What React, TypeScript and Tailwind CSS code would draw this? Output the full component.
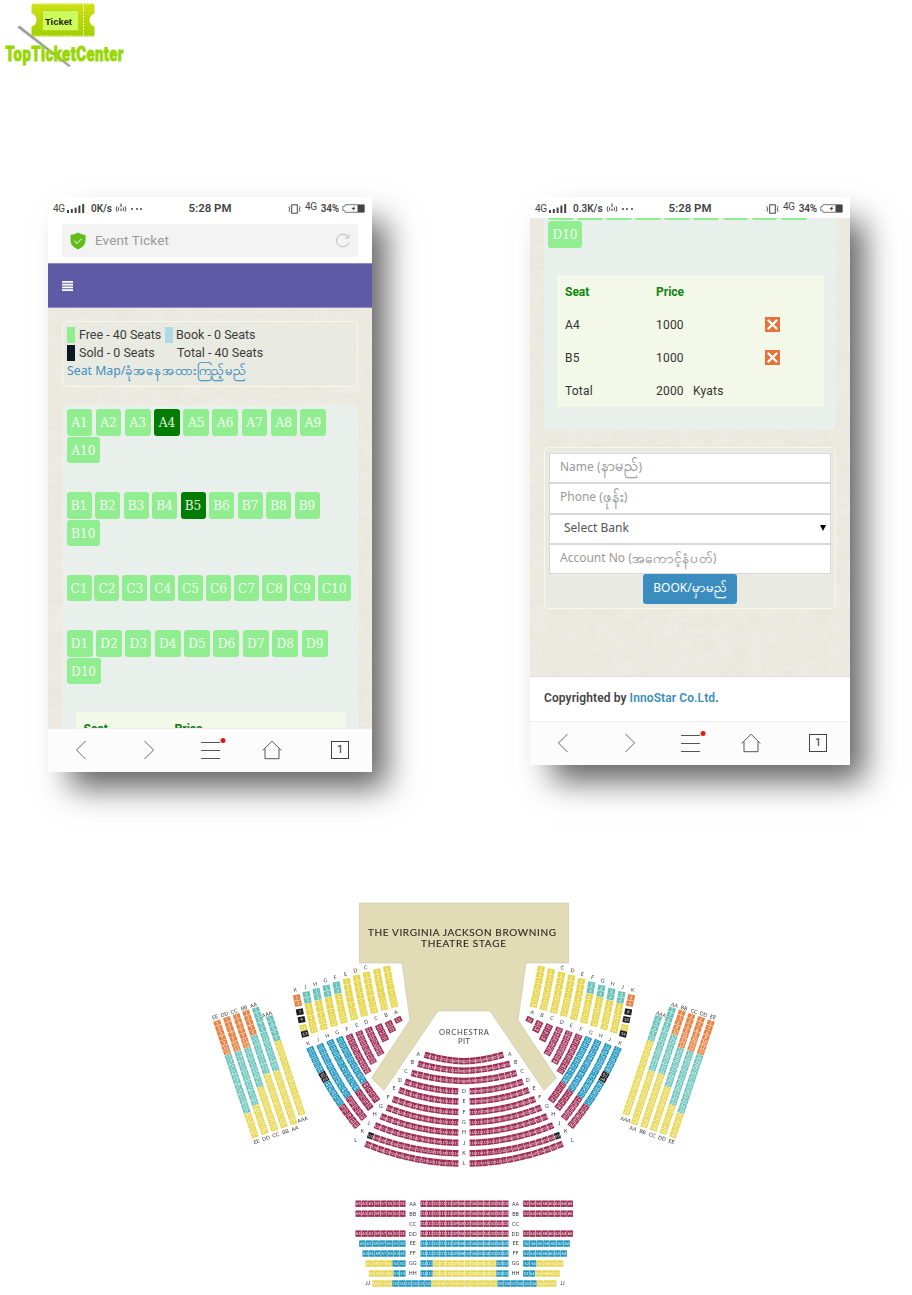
import { ReactNode } from "react";
import clsx from "clsx";

type Point = [number, number];
type Run = [string, number];

const RED = "#9c2b50";
const BLUE = "#1c93bd";
const YELLOW = "#e6d548";
const TEAL = "#66c2b9";
const ORANGE = "#e58142";
const BLACK = "#1c1a1a";

// the seat map is symmetric around the middle of the stage
const CENTER = 464;

function Signal() {
  return (
    <svg width="18" height="10" viewBox="0 0 18 10" fill="#444">
      <rect x="0" y="6" width="2" height="3" />
      <rect x="3.8" y="5" width="2" height="4" />
      <rect x="7.6" y="3.6" width="2" height="5.4" />
      <rect x="11.4" y="1.500" width="2" height="7.500" />
      <rect x="15.2" y="0" width="2" height="9" />
    </svg>
  );
}

function Hotspot() {
  return (
    <svg width="12" height="11" viewBox="0 0 12 11" fill="none" stroke="#555">
      <path d="M2 3.2Q.2 6 2 8.8M10 3.2Q11.800 6 10 8.800M3.900 4.300Q2.800 6 3.900 7.800M8.100 4.300Q9.200 6 8.100 7.800" />
      <path d="M6 .5V4M6 5.500V8" strokeWidth="1.200" />
    </svg>
  );
}

function Battery() {
  return (
    <svg width="23" height="9" viewBox="0 0 23 9" fill="none">
      <path
        d="M22 .7H3.200L2.600 2.500H.8V6.500H2.600L3.200 8.300H22Z"
        stroke="#777"
      />
      <rect x="15.500" y="1" width="7" height="7" fill="#444" />
      <path d="M12.800 2L9.500 4.900h1.900L10.500 7 13.600 4.200h-1.700z" fill="#333" />
    </svg>
  );
}

function Vibrate() {
  return (
    <svg width="13" height="10" viewBox="0 0 13 10" fill="none" stroke="#444">
      <rect x="3.700" y=".8" width="5.600" height="8.400" />
      <path
        d="M1.900 2.200l-1 1.300 1 1.500-1 1.500 1 1.300M11.100 2.200l1 1.300-1 1.500 1 1.500-1 1.300"
        strokeWidth=".9"
      />
    </svg>
  );
}

function StatusBar({ speed }: { speed: string }) {
  return (
    <div className="relative flex h-[21px] shrink-0 items-center bg-white pt-[2px] pr-[7px] pl-[5px] text-[#444]">
      <span className="w-[14px] text-[10px] tracking-[-0.3px]">4G</span>
      <Signal />
      <span className="ml-[6px] mr-[3px] text-[10px] font-semibold whitespace-nowrap">
        {speed}
      </span>
      <Hotspot />
      <span className="ml-[4px] flex gap-[2.500px]">
        <i className="size-[2px] rounded-full bg-[#444]" />
        <i className="size-[2px] rounded-full bg-[#444]" />
        <i className="size-[2px] rounded-full bg-[#444]" />
      </span>
      <div className="ml-auto flex items-center">
        <Vibrate />
        <span className="relative -top-[2px] ml-[4px] mr-[4px] text-[10px] tracking-[-0.3px]">
          4G
        </span>
        <span className="mr-[3px] text-[10px] font-semibold tracking-[-0.2px]">
          34%
        </span>
        <Battery />
      </div>
      <span className="absolute inset-x-0 top-[3px] text-center text-[11.500px] leading-[17px] font-semibold">
        5:28 PM
      </span>
    </div>
  );
}

function NavBar() {
  return (
    <nav className="relative flex h-[44px] shrink-0 items-center justify-between border-t border-[#ececec] bg-[#fcfcfc] pb-[2px] pl-[27px] pr-[23px]">
      <svg width="12" height="20" fill="none" stroke="#666">
        <path d="M10.500 1L1.500 10l9 9" />
      </svg>
      <svg
        className="ml-[37px]"
        width="12"
        height="20"
        fill="none"
        stroke="#666"
      >
        <path d="M1.500 1l9 9-9 9" />
      </svg>
      <svg
        className="ml-[26px]"
        width="27"
        height="24"
        fill="none"
        stroke="#555"
      >
        <path d="M1 4.500H20M1 12.500H20M1 20.500H20" />
        <circle cx="23" cy="2.500" r="2.500" fill="#e91414" stroke="none" />
      </svg>
      <svg
        className="ml-[16px]"
        width="20"
        height="20"
        fill="none"
        stroke="#555"
      >
        <path d="M.7 10.500L10 1.200l9.300 9.300M3 8.500V18.700H17V8.500" />
      </svg>
      <div className="ml-[30px] flex size-[18px] items-center justify-center border border-[#444] text-[11px] leading-none text-[#333]">
        1
      </div>
    </nav>
  );
}

function Paper() {
  return (
    <svg className="absolute inset-0 size-full opacity-15">
      <filter id="paper">
        <feTurbulence type="fractalNoise" baseFrequency="0.06 0.09" numOctaves="4" />
        <feColorMatrix values="0 0 0 0 .6  0 0 0 0 .56  0 0 0 0 .46  1.2 0 0 0 -.1" />
      </filter>
      <rect width="100%" height="100%" filter="url(#paper)" />
    </svg>
  );
}

function Phone({
  speed,
  children,
  className,
}: {
  speed: string;
  children: ReactNode;
  className: string;
}) {
  return (
    <div
      className={clsx(
        "flex flex-col overflow-hidden bg-[#eeece4] shadow-[18px_20px_30px_-4px_rgba(0,0,0,0.62)]",
        className
      )}
    >
      <StatusBar speed={speed} />
      <div className="relative min-h-0 flex-1 overflow-hidden">
        <Paper />
        <div className="relative flex flex-col">{children}</div>
      </div>
      <NavBar />
    </div>
  );
}

function Mm({ children, className }: { children: string; className?: string }) {
  return (
    <span
      lang="my"
      className={clsx(
        "leading-none [-webkit-text-stroke:0.25px_currentColor]",
        className ?? "text-[14.400px]"
      )}
    >
      {children}
    </span>
  );
}

function SeatRow({
  row,
  selected,
  chip,
  wide,
  gap,
}: {
  row: string;
  selected?: number;
  chip: string;
  wide: string;
  gap: string;
}) {
  return (
    <div className={clsx("flex flex-wrap gap-y-[1px]", gap)}>
      {Array.from({ length: 10 }, (_, i) => i + 1).map((n) => (
        <span
          key={n}
          className={clsx(
            "flex h-[26.700px] items-center justify-center rounded-[3px] font-['DejaVu_Serif_Condensed','Liberation_Serif',serif] text-[13.500px] text-white/90",
            n === 10 ? wide : chip,
            n === selected ? "bg-[#007d00]" : "bg-[#90ee90]"
          )}
        >
          {row}
          {n}
        </span>
      ))}
    </div>
  );
}

function SeatPhone() {
  return (
    <Phone speed="0K/s" className="h-[575px] w-[324px]">
      <div className="h-[45px] shrink-0 bg-white px-[14px] pt-[6px]">
        <div className="flex h-[33px] items-center rounded-[2px] bg-[#f3f3f3] pl-[8px] pr-[7px]">
          <svg width="16" height="18" viewBox="0 0 16 18">
            <path
              d="M8 .5Q11.500 2.800 15.500 3V9Q15 14.500 8 17.500Q1 14.500 .5 9V3Q4.500 2.800 8 .5Z"
              fill="#62bd1c"
            />
            <path d="M4.300 8.800l2.700 2.600 4.800-4.800" stroke="#fff" fill="none" />
          </svg>
          <span className="ml-[9px] text-[13.500px] tracking-[0.1px] text-[#999]">
            Event Ticket
          </span>
          <svg
            className="ml-auto"
            width="16"
            height="15"
            viewBox="0 0 16 15"
            fill="none"
            stroke="#bbb"
          >
            <path d="M13.300 4.500A6.300 6.300 0 1 0 13.800 9.500M13.800 1.500V5H10.300" />
          </svg>
        </div>
      </div>
      <div className="flex h-[45px] shrink-0 items-center border-y border-[#8f8cc5] bg-[#5f5aa6] pl-[14px]">
        <svg width="11" height="10" fill="#fff">
          <path d="M0 0H11V1.700H0ZM0 2.800H11V4.500H0ZM0 5.600H11V7.300H0ZM0 8.300H11V10H0Z" />
        </svg>
      </div>
      <div className="mx-[14px] mt-[13px] h-[66px] shrink-0 rounded-[4px] border border-[#f7f7ea] bg-[#e9eae1] pl-[4px] pt-[4px] text-[12.500px] leading-[18px] text-[#3c3c3c]">
        <div className="flex h-[18px] items-center">
          <i className="mr-[4px] h-[16px] w-[8px] bg-[#90ee90]" />
          <span className="w-[86px] whitespace-nowrap">Free - 40 Seats</span>
          <i className="mr-[3px] h-[16px] w-[8px] bg-[#add8e6]" />
          <span>Book - 0 Seats</span>
        </div>
        <div className="flex h-[18px] items-center">
          <i className="mr-[4px] h-[16px] w-[8px] bg-[#0b1a22]" />
          <span className="w-[98px]">Sold - 0 Seats</span>
          <span>Total - 40 Seats</span>
        </div>
        <a className="block h-[18px] font-['Noto_Sans',sans-serif] text-[12.300px] whitespace-nowrap text-[#3f8fc0]">
          Seat Map/
          <Mm className="text-[13.200px]">ခုံအနေအထားကြည့်မည်</Mm>
        </a>
      </div>
      <div className="mx-[14px] mt-[18px] shrink-0 rounded-[4px] bg-[#e9f0eb] px-[4.500px] pt-[4px]">
        <div className="flex flex-col gap-[28.500px]">
          <SeatRow
            row="A"
            selected={4}
            chip="w-[25.800px]"
            wide="w-[33.500px]"
            gap="gap-x-[3.400px]"
          />
          <SeatRow
            row="B"
            selected={5}
            chip="w-[25px]"
            wide="w-[33.500px]"
            gap="gap-x-[3.500px]"
          />
          <SeatRow
            row="C"
            chip="w-[25px]"
            wide="w-[33px]"
            gap="gap-x-[2.900px]"
          />
          <SeatRow
            row="D"
            chip="w-[26px]"
            wide="w-[34px]"
            gap="gap-x-[3.400px]"
          />
        </div>
        <div className="ml-[9px] mt-[28px] flex h-[33px] w-[270px] items-center bg-[#f4f8e9] px-[8px] text-[12px] font-bold text-[#0d7a0d]">
          <span className="w-[91px]">Seat</span>
          <span>Price</span>
        </div>
      </div>
    </Phone>
  );
}

function RemoveIcon() {
  return (
    <svg width="15" height="15" viewBox="0 0 15 15">
      <rect width="15" height="15" fill="#e8703a" />
      <path
        d="M3.500 3.500l8 8M11.500 3.500l-8 8"
        stroke="#fff"
        strokeWidth="2.400"
        strokeLinecap="round"
      />
    </svg>
  );
}

function Field({ children }: { children: ReactNode }) {
  return (
    <div className="flex h-[30.300px] items-center border border-[#d8d8dc] bg-white pb-[3px] pl-[10px] whitespace-pre">
      {children}
    </div>
  );
}

function BookingPhone() {
  const rows = [
    ["A4", "1000"],
    ["B5", "1000"],
  ];

  return (
    <Phone speed="0.3K/s" className="h-[568px] w-[320px]">
      <div className="mx-[14px] h-[212px] shrink-0 rounded-b-[4px] bg-[#e9f0eb] px-[4px]">
        <div className="flex gap-[3.300px]">
          {Array.from({ length: 9 }, (_, i) => (
            <i key={i} className="h-[2px] w-[25.800px] rounded-b bg-[#90ee90]" />
          ))}
        </div>
        <div className="mt-[1px] flex h-[26.500px] w-[34px] items-center justify-center rounded-[3px] bg-[#90ee90] font-['DejaVu_Serif_Condensed','Liberation_Serif',serif] text-[13.500px] text-white/90">
          D10
        </div>
        <div className="ml-[9px] mt-[27.500px] w-[267px] bg-[#f4f8e9] text-[12px] tracking-[0.2px] text-[#333]">
          <div className="flex h-[33px] items-center pl-[8px] font-bold tracking-normal text-[#0d860d]">
            <span className="w-[91px]">Seat</span>
            <span>Price</span>
          </div>
          {rows.map(([seat, price]) => (
            <div key={seat} className="flex h-[33px] items-center pl-[8px]">
              <span className="w-[91px]">{seat}</span>
              <span className="w-[109px]">{price}</span>
              <RemoveIcon />
            </div>
          ))}
          <div className="flex h-[33px] items-center pl-[8px]">
            <span className="w-[91px]">Total</span>
            <span className="w-[37px]">2000</span>
            <span>Kyats</span>
          </div>
        </div>
      </div>
      <form className="mx-[14px] mt-[17px] flex h-[162px] shrink-0 flex-col rounded-[4px] border border-[#f7f7ea] bg-[#e9eae1] px-[4px] pt-[5px] font-['Noto_Sans',sans-serif] text-[12px] text-[#999]">
        <Field>
          Name (<Mm>နာမည်</Mm>)
        </Field>
        <Field>
          Phone (<Mm>ဖုန်း</Mm>)
        </Field>
        <div className="flex h-[30.300px] items-center justify-between border border-[#d8d8dc] bg-white pl-[14px] pr-[4px] pb-[2px] text-[#555]">
          Select Bank
          <svg width="6" height="6">
            <path d="M0 0H6L3 6Z" fill="#000" />
          </svg>
        </div>
        <Field>
          Account No (<Mm className="text-[13.800px]">အကောင့်နံပတ်</Mm>)
        </Field>
        <div className="flex h-[30px] w-[94px] items-center justify-center self-center rounded-[3px] bg-[#3a8dbe] pb-[3px] text-white whitespace-nowrap">
          BOOK/<Mm className="text-[13px]">မှာမည်</Mm>
        </div>
      </form>
      <footer className="mt-[67px] flex h-[45px] shrink-0 items-center border-t border-[#dcdcdc] bg-white pb-[2px] pl-[14px] text-[12px] font-semibold tracking-[0.1px] text-[#444]">
        Copyrighted by&nbsp;<a className="text-[#3c8dbc]">InnoStar Co.Ltd</a>.
      </footer>
    </Phone>
  );
}

// seats laid along a quadratic curve, coloured run by run
function Strip({
  from,
  to,
  via,
  runs,
  w,
  first = 1,
  step = 2,
  flip = false,
  upright = false,
}: {
  from: Point;
  to: Point;
  via?: Point;
  runs: Run[];
  w: number;
  first?: number;
  step?: number;
  flip?: boolean;
  upright?: boolean;
}) {
  const colors = runs.flatMap(([color, n]) => Array<string>(n).fill(color));
  const count = colors.length;
  const c = via ?? [(from[0] + to[0]) / 2, (from[1] + to[1]) / 2];
  const pitch = Math.hypot(to[0] - from[0], to[1] - from[1]) / count;

  return (
    <>
      {colors.map((color, i) => {
        const t = (i + 0.5) / count;
        const at = (k: 0 | 1) =>
          (1 - t) * (1 - t) * from[k] + 2 * t * (1 - t) * c[k] + t * t * to[k];
        const slope = (k: 0 | 1) =>
          (1 - t) * (c[k] - from[k]) + t * (to[k] - c[k]);
        const x = flip ? 2 * CENTER - at(0) : at(0);
        const dx = flip ? -slope(0) : slope(0);
        let angle = (Math.atan2(slope(1), dx) * 180) / Math.PI;
        if (!upright) angle -= 90;
        else if (dx < 0) angle += 180;
        const sw = upright ? pitch : w;
        const sh = upright ? w : pitch;
        const label = String(first + (flip && !upright ? 1 : 0) + i * step);
        return (
          <g
            key={i}
            transform={`translate(${x.toFixed(2)} ${at(1).toFixed(2)}) rotate(${angle.toFixed(1)})`}
          >
            <rect
              x={-sw / 2 + 0.2}
              y={-sh / 2 + 0.2}
              width={sw - 0.4}
              height={sh - 0.4}
              fill={color}
            />
            <text
              y="1.5"
              fontSize={label.length > 2 ? 3.4 : 4.2}
              fill="#fff"
              textAnchor="middle"
            >
              {label}
            </text>
          </g>
        );
      })}
    </>
  );
}

function Label({
  x,
  y,
  angle = 0,
  children,
}: {
  x: number;
  y: number;
  angle?: number;
  children: string;
}) {
  return (
    <text
      transform={`translate(${x} ${y}) rotate(${angle})`}
      y="1.9"
      fontSize="5.2"
      fill="#333"
      textAnchor="middle"
    >
      {children}
    </text>
  );
}

const balcony: { name: string; from: Point; to: Point; runs: Run[]; top: Point; bottom: Point }[] = [
  { name: "EE", from: [216.5, 1020.5], to: [255.5, 1137.5], runs: [[ORANGE, 7], [TEAL, 12], [YELLOW, 5]], top: [215, 1017], bottom: [256.5, 1141.5] },
  { name: "DD", from: [226.200, 1017], to: [265.200, 1134], runs: [[ORANGE, 7], [TEAL, 11], [YELLOW, 6]], top: [224.500, 1014.200], bottom: [266, 1138.300] },
  { name: "CC", from: [235.900, 1013.800], to: [274.900, 1130.800], runs: [[ORANGE, 7], [TEAL, 8], [YELLOW, 9]], top: [234, 1011.300], bottom: [275.700, 1135] },
  { name: "BB", from: [245.500, 1010.500], to: [284.500, 1127.500], runs: [[ORANGE, 5], [TEAL, 8], [YELLOW, 11]], top: [244, 1008], bottom: [285.300, 1131.700] },
  { name: "AA", from: [255.200, 1007.500], to: [294.200, 1124.500], runs: [[TEAL, 13], [YELLOW, 11]], top: [253.500, 1005], bottom: [295, 1128.500] },
  { name: "AAA", from: [269.200, 1016], to: [302.200, 1115], runs: [[TEAL, 5], [YELLOW, 15]], top: [267, 1014.200], bottom: [302.500, 1119.500] },
];

const upper: { name: string; from: Point; runs: Run[] }[] = [
  { name: "J", from: [306, 991.500], runs: [[TEAL, 2], [YELLOW, 5]] },
  { name: "H", from: [316, 988.300], runs: [[TEAL, 2], [YELLOW, 5]] },
  { name: "G", from: [326, 985], runs: [[TEAL, 2], [YELLOW, 5]] },
  { name: "F", from: [336, 981.800], runs: [[TEAL, 2], [YELLOW, 5]] },
  { name: "E", from: [346.200, 978.500], runs: [[YELLOW, 7]] },
  { name: "D", from: [356.200, 975], runs: [[YELLOW, 7]] },
  { name: "C", from: [366.200, 972], runs: [[YELLOW, 7]] },
  { name: "", from: [376.500, 968.700], runs: [[YELLOW, 7]] },
  { name: "", from: [386.500, 966], runs: [[YELLOW, 7]] },
];

const lower: { name: string; from: Point; to: Point; bulge: number; runs: Run[]; label: Point }[] = [
  { name: "K", from: [309.500, 1047], to: [358, 1127], bulge: 7, runs: [[BLUE, 5], [BLACK, 2], [BLUE, 5], [RED, 5]], label: [308, 1043] },
  { name: "J", from: [319.500, 1044], to: [364.500, 1119], bulge: 6, runs: [[BLUE, 11], [RED, 5]], label: [318, 1039.300] },
  { name: "H", from: [329.500, 1040], to: [371, 1109], bulge: 5, runs: [[BLUE, 10], [RED, 4]], label: [327.300, 1035.700] },
  { name: "G", from: [339, 1037], to: [377.500, 1101.500], bulge: 4, runs: [[BLUE, 9], [RED, 4]], label: [337, 1032.300] },
  { name: "F", from: [348.700, 1034.300], to: [368.500, 1073], bulge: 2, runs: [[RED, 8]], label: [347, 1029] },
  { name: "E", from: [358.500, 1031], to: [374, 1063.500], bulge: 1.500, runs: [[RED, 7]], label: [356.700, 1025.300] },
  { name: "D", from: [368, 1027.500], to: [381.500, 1055], bulge: 1, runs: [[RED, 6]], label: [366.300, 1022] },
  { name: "C", from: [378, 1024.500], to: [386, 1041], bulge: 0, runs: [[RED, 3]], label: [376, 1018] },
  { name: "B", from: [387.700, 1021.300], to: [393, 1032], bulge: 0, runs: [[RED, 2]], label: [386, 1015] },
  { name: "A", from: [397, 1017.200], to: [399.500, 1022.500], bulge: 0, runs: [[RED, 1]], label: [395.700, 1012] },
];

// name, outer x, outer y, inner y, seats, label x, label y
const pit: [string, number, number, number, number, number, number][] = [
  ["A", 424.300, 1054.500, 1061.300, 7, 418.300, 1054],
  ["B", 417.800, 1063.500, 1070.800, 8, 412.300, 1062.300],
  ["C", 411.300, 1072.800, 1081, 9, 406, 1071],
  ["D", 404.800, 1081.500, 1091.300, 9, 400.300, 1080],
  ["E", 398.800, 1089.800, 1101.500, 10, 394, 1088],
  ["F", 392.500, 1098.800, 1112, 11, 388.300, 1097],
  ["G", 386.500, 1107.300, 1122.300, 12, 381, 1106],
  ["H", 380.500, 1116, 1132.500, 13, 374.700, 1114.300],
  ["J", 374.500, 1125, 1142.800, 14, 368.700, 1123],
  ["K", 367.500, 1134.500, 1153.300, 15, 362.300, 1131.300],
  ["L", 365, 1143.500, 1163.500, 15, 355.700, 1140],
];

const rear: { name: string; left: Run[]; leftX: number; mid: Run[]; right: Run[]; rightX: number }[] = [
  { name: "AA", left: [[RED, 8]], leftX: 355.300, mid: [[RED, 14]], right: [[RED, 8]], rightX: 573.200 },
  { name: "BB", left: [[RED, 8]], leftX: 355.300, mid: [[RED, 14]], right: [[RED, 8]], rightX: 573.200 },
  { name: "CC", left: [], leftX: 0, mid: [[RED, 14]], right: [], rightX: 0 },
  { name: "DD", left: [[RED, 8]], leftX: 355.300, mid: [[RED, 14]], right: [[RED, 8]], rightX: 573.200 },
  { name: "EE", left: [[BLUE, 7]], leftX: 359, mid: [[BLUE, 14]], right: [[BLUE, 7]], rightX: 570 },
  { name: "FF", left: [[BLUE, 7]], leftX: 362.300, mid: [[BLUE, 14]], right: [[BLUE, 7]], rightX: 567 },
  { name: "GG", left: [[YELLOW, 4], [BLUE, 2]], leftX: 365.300, mid: [[BLUE, 2], [YELLOW, 10], [BLUE, 2]], right: [[BLUE, 2], [YELLOW, 4]], rightX: 563.500 },
  { name: "HH", left: [[YELLOW, 4], [BLUE, 2]], leftX: 368.700, mid: [[BLUE, 2], [YELLOW, 10], [BLUE, 2]], right: [[BLUE, 2], [YELLOW, 4]], rightX: 560 },
];

const seatCount = (runs: Run[]) => runs.reduce((sum, [, n]) => sum + n, 0);

function SideSections({ flip }: { flip: boolean }) {
  const fx = (x: number) => (flip ? 2 * CENTER - x : x);
  const sign = flip ? -1 : 1;

  return (
    <g>
      {balcony.map((s) => (
        <g key={s.name}>
          <Strip from={s.from} to={s.to} runs={s.runs} w={7.400} flip={flip} />
          <Label x={fx(s.top[0])} y={s.top[1]} angle={-18 * sign}>
            {s.name}
          </Label>
          <Label x={fx(s.bottom[0])} y={s.bottom[1]} angle={-18 * sign}>
            {s.name}
          </Label>
        </g>
      ))}

      <Label x={fx(295.3)} y={989.7} angle={-14 * sign}>
        K
      </Label>
      <Strip from={[296.200, 994.500]} to={[298.800, 1006.500]} runs={[[ORANGE, 2]]} w={7.500} flip={flip} />
      <Strip from={[299.200, 1008.700]} to={[300.400, 1015]} runs={[[BLACK, 1]]} first={7} w={7.500} flip={flip} />
      <Strip from={[301, 1016.500]} to={[302.200, 1022.800]} runs={[[BLACK, 1]]} first={9} w={7.500} flip={flip} />
      <Strip from={[302.600, 1024.500]} to={[305.600, 1037]} runs={[[YELLOW, 1], [BLACK, 1]]} first={11} w={7.500} flip={flip} />

      {upper.map((s, i) => (
        <g key={i}>
          <Strip
            from={s.from}
            to={[s.from[0] + 8.500, s.from[1] + 41.500]}
            via={[s.from[0] + 3.500, s.from[1] + 20.700]}
            runs={s.runs}
            w={7.600}
            flip={flip}
          />
          {s.name && (
            <Label x={fx(s.from[0] - 0.7)} y={s.from[1] - 4.5} angle={-14 * sign}>
              {s.name}
            </Label>
          )}
        </g>
      ))}

      {lower.map((s) => (
        <g key={s.name}>
          <Strip
            from={s.from}
            to={s.to}
            via={[
              (s.from[0] + s.to[0]) / 2 - s.bulge * 0.85,
              (s.from[1] + s.to[1]) / 2 + s.bulge * 0.52,
            ]}
            runs={s.runs}
            first={51}
            w={7.600}
            flip={flip}
          />
          <Label x={fx(s.label[0])} y={s.label[1]} angle={-20 * sign}>
            {s.name}
          </Label>
        </g>
      ))}
    </g>
  );
}

function SeatMap() {
  return (
    <svg
      className="ml-[205px] block shrink-0 font-['Lato',sans-serif] opacity-[0.99]"
      width="520"
      height="400"
      viewBox="205 895 520 400"
    >
      <path
        d="M359.500 903H568.500V963H526L518 1020 556.500 1078 544 1090.500 490 1011H438L384 1090.500 371.500 1078 410 1020 402 963H359.500Z"
        fill="#e2dcb6"
        stroke="#c4c1ac"
        strokeWidth=".6"
      />
      <g fill="#2e2a22" stroke="#2e2a22" strokeWidth=".15">
        <text x="368" y="935.500" fontSize="10" textLength="188">
          THE VIRGINIA JACKSON BROWNING
        </text>
        <text x="421" y="947" fontSize="10" textLength="85">
          THEATRE STAGE
        </text>
      </g>
      <text x="439" y="1034.700" fontSize="7.600" textLength="50" fill="#444">
        ORCHESTRA
      </text>
      <text x="458" y="1043.500" fontSize="7.600" textLength="12" fill="#444">
        PIT
      </text>

      <SideSections flip={false} />
      <SideSections flip />

      {pit.map(([name, x, y, innerY, n, lx, ly], i) => {
        const inner = i < 3 ? CENTER : 458.5;
        const runs: Run[] =
          name === "K" ? [[BLACK, 1], [RED, n - 1]] : [[RED, n]];
        return (
          <g key={name}>
            {[false, true].map((flip) => (
              <Strip
                key={String(flip)}
                from={[x, y]}
                to={[inner, innerY]}
                via={[(x + inner) / 2, innerY - 0.8]}
                runs={runs}
                w={6.800}
                first={flip ? 101 : 100 + 2 * n}
                step={flip ? 1 : -1}
                flip={flip}
                upright
              />
            ))}
            <Label x={lx} y={ly}>
              {name}
            </Label>
            <Label x={2 * CENTER - lx} y={ly}>
              {name}
            </Label>
            {i > 2 && (
              <Label x={CENTER} y={innerY}>
                {name}
              </Label>
            )}
          </g>
        );
      })}

      {rear.map((r, i) => {
        const y = 1203.700 + i * 9.970;
        return (
          <g key={r.name}>
            <Strip
              from={[r.leftX, y]}
              to={[405.700, y]}
              runs={r.left}
              w={6.800}
              first={49 + 2 * seatCount(r.left)}
              step={-2}
              upright
            />
            <Label x={412.700} y={y}>
              {r.name}
            </Label>
            <Strip
              from={[420.300, y]}
              to={[508.700, y]}
              runs={r.mid}
              w={6.800}
              first={114}
              step={-1}
              upright
            />
            <Label x={515.500} y={y}>
              {r.name}
            </Label>
            <Strip
              from={[523, y]}
              to={[r.rightX, y]}
              runs={r.right}
              w={6.800}
              first={52}
              upright
            />
          </g>
        );
      })}
      <Label x={367.700} y={1283.500}>
        JJ
      </Label>
      <Strip
        from={[372.300, 1283.500]}
        to={[556.500, 1283.500]}
        runs={[[YELLOW, 3], [BLUE, 6], [YELLOW, 10], [BLUE, 6], [YELLOW, 3]]}
        w={6.800}
        first={128}
        step={-1}
        upright
      />
      <Label x={562.500} y={1283.500}>
        JJ
      </Label>
    </svg>
  );
}

function Logo() {
  return (
    <svg width="130" height="70" viewBox="0 0 130 70">
      <defs>
        <linearGradient id="ticket" x1="0" y1="0" x2="0" y2="1">
          <stop offset="0" stopColor="#cfe012" />
          <stop offset="1" stopColor="#a3cf00" />
        </linearGradient>
      </defs>
      <path
        d="M17.500 27.500L19.500 25.500 70.500 65.500 69 67Z"
        fill="#999"
        stroke="#ccc"
        strokeWidth=".8"
      />
      <path
        d="M34 3.500H92Q94.500 3.500 94.500 6V13.500Q89.500 15 89.500 20T94.500 26.500V34Q94.500 36.500 92 36.500H34Q31.500 36.500 31.500 34V26.500Q36.500 25 36.500 20T31.500 13.500V6Q31.500 3.500 34 3.500Z"
        fill="url(#ticket)"
      />
      <path d="M34 4H92M34 36H92" stroke="#eef7b0" strokeDasharray="2 1" />
      <path d="M83.500 4V36" stroke="#f4fac8" strokeDasharray="2 1" />
      <rect x="42.500" y="10.500" width="36" height="20" rx="1" fill="#cdfa5c" stroke="#b3d91d" />
      <text
        x="45"
        y="25"
        fontSize="9.500"
        fontWeight="bold"
        textLength="27"
        lengthAdjust="spacingAndGlyphs"
        className="font-['Liberation_Sans',sans-serif]"
        fill="#1b2400"
      >
        Ticket
      </text>
      <text
        transform="translate(5.300 60.800) scale(.76 1)"
        fontSize="19.500"
        fontWeight="900"
        textLength="155.500"
        className="font-['Roboto','Liberation_Sans',sans-serif]"
        fill="#97d700"
        stroke="#97d700"
        strokeWidth=".8"
      >
        TopTicketCenter
      </text>
    </svg>
  );
}

export default function App() {
  return (
    <main className="flex h-[1295px] w-[912px] flex-col overflow-hidden bg-white font-['Roboto',sans-serif]">
      <header className="h-[197px] shrink-0">
        <Logo />
      </header>
      <section className="flex h-[698px] shrink-0 items-start gap-[158px] pl-12">
        <SeatPhone />
        <BookingPhone />
      </section>
      <SeatMap />
    </main>
  );
}
